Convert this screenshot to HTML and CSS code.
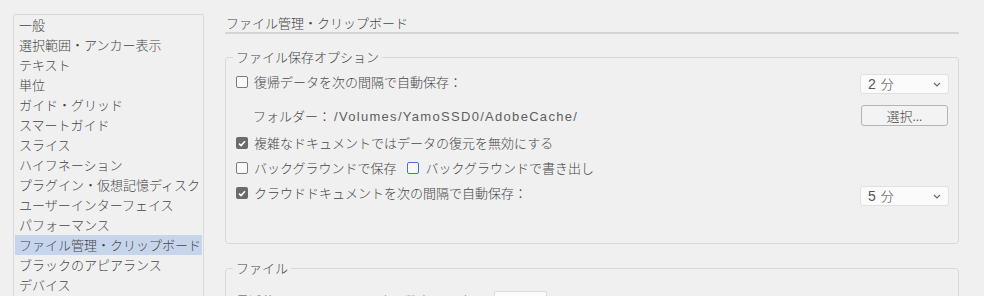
FILE: index.html
```html
<!DOCTYPE html>
<html lang="ja">
<head>
<meta charset="utf-8">
<link rel="stylesheet" href="styles.css">
</head>
<body>
<div class="app">
  <ul class="sidebar">
    <li class="item">一般</li>
    <li class="item">選択範囲・アンカー表示</li>
    <li class="item">テキスト</li>
    <li class="item">単位</li>
    <li class="item">ガイド・グリッド</li>
    <li class="item">スマートガイド</li>
    <li class="item">スライス</li>
    <li class="item">ハイフネーション</li>
    <li class="item">プラグイン・仮想記憶ディスク</li>
    <li class="item">ユーザーインターフェイス</li>
    <li class="item">パフォーマンス</li>
    <li class="item selected">ファイル管理・クリップボード</li>
    <li class="item">ブラックのアピアランス</li>
    <li class="item">デバイス</li>
  </ul>
  <main class="main">
    <h1 class="title">ファイル管理・クリップボード</h1>
    <fieldset class="group">
      <legend class="legend">ファイル保存オプション</legend>
      <div class="row row-first">
        <span class="check"></span>
        <span class="label">復帰データを次の間隔で自動保存：</span>
        <span class="select"><span class="select-text"><span class="num">2</span>分</span><svg class="chev" width="8" height="5" viewBox="0 0 8 5"><path d="M1 1 L4 4 L7 1" fill="none" stroke="#666" stroke-width="1.1"/></svg></span>
      </div>
      <div class="row row-folder">
        <span class="label folder">フォルダー：<span class="path">/Volumes/YamoSSD0/AdobeCache/</span></span>
        <span class="button">選択...</span>
      </div>
      <div class="row row-third">
        <span class="check checked"><svg width="8" height="7" viewBox="0 0 8 7"><path d="M1 3.6 L3.1 5.6 L7 1.2" fill="none" stroke="#fff" stroke-width="1.6"/></svg></span>
        <span class="label">複雑なドキュメントではデータの復元を無効にする</span>
      </div>
      <div class="row">
        <span class="check"></span>
        <span class="label">バックグラウンドで保存</span>
        <span class="check focus"></span>
        <span class="label">バックグラウンドで書き出し</span>
      </div>
      <div class="row">
        <span class="check checked"><svg width="8" height="7" viewBox="0 0 8 7"><path d="M1 3.6 L3.1 5.6 L7 1.2" fill="none" stroke="#fff" stroke-width="1.6"/></svg></span>
        <span class="label">クラウドドキュメントを次の間隔で自動保存：</span>
        <span class="select sel-low"><span class="select-text"><span class="num">5</span>分</span><svg class="chev" width="8" height="5" viewBox="0 0 8 5"><path d="M1 1 L4 4 L7 1" fill="none" stroke="#666" stroke-width="1.1"/></svg></span>
      </div>
    </fieldset>
    <fieldset class="group group-file">
      <legend class="legend">ファイル</legend>
      <div class="row row-recent">
        <span class="label plain">最近使用したファイルの表示数 (0 ～ 30)：</span>
        <span class="input">20</span>
      </div>
    </fieldset>
  </main>
</div>
</body>
</html>
```

FILE: styles.css
```css
html, body {
  margin: 0;
  padding: 0;
  background: #f0f0f0;
  overflow: hidden;
}
body {
  font-family: "Noto Sans CJK JP", sans-serif;
  font-size: 13px;
  font-weight: 300;
  color: #474747;
}
.app {
  display: flex;
  align-items: flex-start;
  padding: 13px 25px 0 13px;
  gap: 21px;
  height: 296px;
  box-sizing: border-box;
}
.sidebar {
  list-style: none;
  margin: 1px 0 0 0;
  padding: 0;
  width: 189px;
  height: 300px;
  border: 1px solid #d9d9d9;
  border-radius: 2px;
  background: #f0f0f0;
  flex: none;
}
.item {
  height: 20px;
  line-height: 20px;
  margin: 0 1px;
  padding-left: 4px;
  color: #474747;
  white-space: nowrap;
}
.item.selected {
  background: #c7d5ec;
}
.main {
  flex: 1;
  min-width: 0;
}
.title {
  margin: 0;
  font-size: 13px;
  font-weight: 300;
  line-height: 19px;
  padding-left: 1px;
  border-bottom: 2px solid #d4d4d4;
}
.group {
  margin: 13px 0 0 0;
  padding: 5px 9px 40px 10px;
  border: 1px solid #d9d9d9;
  border-radius: 3px;
  min-width: 0;
  display: flex;
  flex-direction: column;
  gap: 5px;
}
.group-file {
  margin-top: 14px;
  padding-bottom: 20px;
}
.legend {
  padding: 0 3px;
  margin-left: -3px;
  line-height: 20px;
}
.row {
  display: flex;
  align-items: flex-start;
  height: 20px;
}
.row-first {
  height: 22px;
}
.row-folder {
  margin-top: 6px;
  height: 21px;
}
.row-third {
  margin-top: 2px;
}
.check {
  flex: none;
  width: 10px;
  height: 10px;
  margin-top: 4px;
  border: 1px solid #7a7a7a;
  border-radius: 2px;
  background: #f8f8f8;
  display: flex;
  align-items: center;
  justify-content: center;
}
.check.checked {
  width: 12px;
  height: 12px;
  border: none;
  background: #6b6b6b;
}
.check.focus {
  width: 10px;
  height: 10px;
  border: 1px solid #3f77c2;
  margin-left: 11px;
}
.label {
  line-height: 20px;
  margin-left: 6px;
  white-space: nowrap;
}
.label.folder {
  margin-left: 17px;
  line-height: 21px;
}
.label.plain {
  margin-left: 0;
}
.path {
  margin-left: 3px;
  letter-spacing: 1.3px;
  font-family: "Liberation Sans", "Noto Sans CJK JP", sans-serif;
  font-weight: 400;
  color: #5e5e5e;
}
.select {
  margin-left: auto;
  margin-top: 2px;
  width: 87px;
  height: 18px;
  border: 1px solid #e0e0e0;
  border-radius: 3px;
  background: #fbfbfb;
  display: flex;
  align-items: center;
  justify-content: space-between;
  flex: none;
}
.sel-low {
  margin-top: 3px;
}
.select-text {
  padding-left: 7px;
  line-height: 18px;
  font-size: 13px;
}
.num {
  margin-right: 5px;
  font-family: "Liberation Sans", sans-serif;
  font-weight: 400;
  font-size: 14px;
  color: #555;
}
.chev {
  margin-right: 7px;
}
.button {
  margin-left: auto;
  margin-right: 1px;
  width: 85px;
  height: 19px;
  border: 1px solid #b4b4b4;
  border-radius: 3px;
  background: #f3f3f3;
  text-align: center;
  line-height: 19px;
  flex: none;
}
.row-recent {
  margin-top: 8px;
}
.input {
  margin-left: 12px;
  width: 53px;
  height: 20px;
  border: 1px solid #ddd;
  border-radius: 2px;
  background: #fbfbfb;
  padding-left: 6px;
  box-sizing: border-box;
  line-height: 18px;
}
```
